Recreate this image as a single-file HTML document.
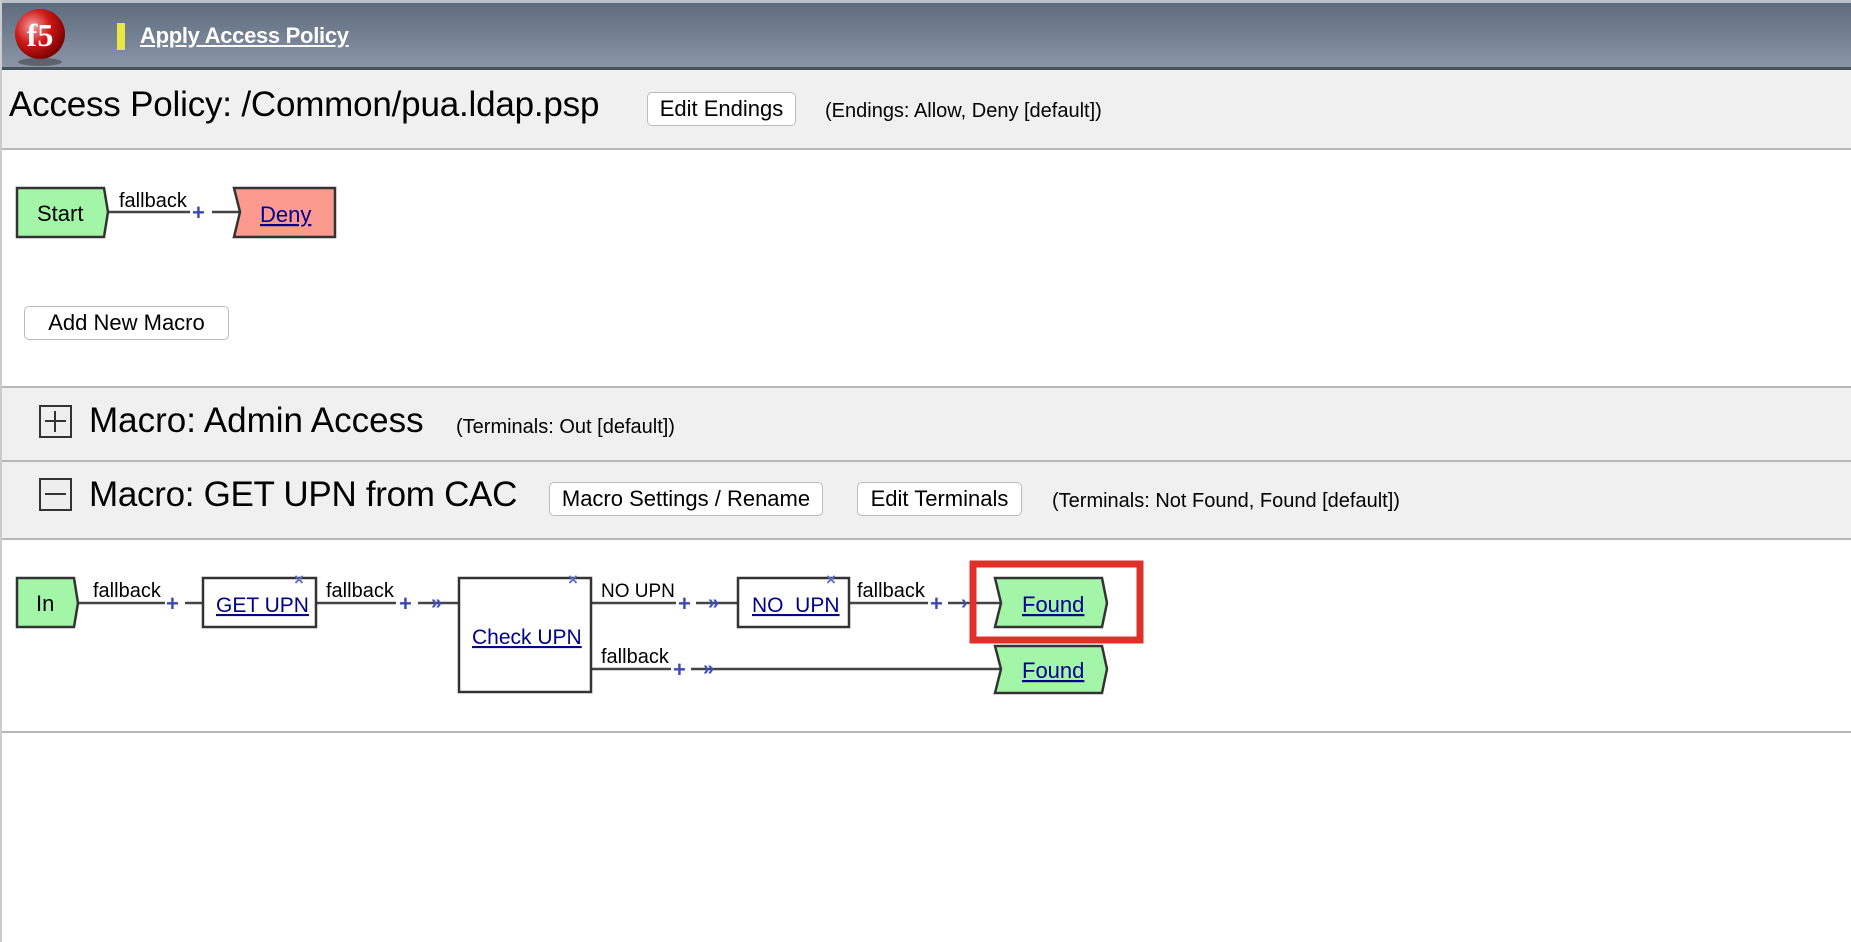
<!DOCTYPE html>
<html><head><meta charset="utf-8"><style>
*{margin:0;padding:0;box-sizing:border-box}
body{width:1851px;height:942px;position:relative;background:#fff;font-family:"Liberation Sans",sans-serif;overflow:hidden;color:#000}
.abs{position:absolute}
.hdr{left:0;top:0;width:1851px;height:70px;background:linear-gradient(#5d6b7d,#8a96a6);border-top:3px solid #b9c0c8;border-bottom:3px solid #49535f}
.band{left:0;width:1851px;background:#f0f0f0;border-bottom:2px solid #b8b8b8}
.btn{position:absolute;background:#fff;border:1px solid #bbb;border-radius:5px;font-size:22px;text-align:center;white-space:nowrap}
.sm{font-size:20px;white-space:nowrap}
.big{font-size:36px;white-space:nowrap}
.box{position:absolute;width:33px;height:33px;border:2px solid #333;background:#eee}
</style></head><body>
<div class="abs hdr"></div>
<svg class="abs" style="left:10px;top:6px" width="62" height="62"><defs><radialGradient id="g" cx="35%" cy="35%" r="70%"><stop offset="0" stop-color="#f4a0a0"/><stop offset=".5" stop-color="#d01818"/><stop offset="1" stop-color="#700"/></radialGradient></defs><ellipse cx="30" cy="56" rx="22" ry="4" fill="#333" opacity=".5"/><circle cx="30" cy="28" r="25" fill="url(#g)"/><text x="30" y="40" text-anchor="middle" font-family="Liberation Serif" font-weight="bold" font-size="32" fill="#fff">f5</text></svg>
<div class="abs" style="left:117px;top:23px;width:8px;height:27px;background:#e8e840"></div>
<div class="abs" style="left:140px;top:23px;color:#fff;font-weight:bold;font-size:22px;text-decoration:underline;letter-spacing:-0.3px">Apply Access Policy</div>

<div class="abs band" style="top:70px;height:80px"></div>
<div class="abs big" style="left:9px;top:85px;font-size:35px;letter-spacing:-0.2px">Access Policy: /Common/pua.ldap.psp</div>
<div class="btn" style="left:647px;top:92px;width:149px;height:34px;line-height:32px">Edit Endings</div>
<div class="abs sm" style="left:825px;top:100px">(Endings: Allow, Deny [default])</div>

<div class="btn" style="left:24px;top:306px;width:205px;height:34px;line-height:32px">Add New Macro</div>

<div class="abs" style="left:0;top:386px;width:1851px;height:2px;background:#b8b8b8"></div>
<div class="abs band" style="top:388px;height:74px"></div>
<div class="box" style="left:39px;top:405px"></div>
<div class="abs" style="left:45px;top:420px;width:21px;height:2px;background:#333"></div>
<div class="abs" style="left:54px;top:411px;width:2px;height:21px;background:#333"></div>
<div class="abs big" style="left:89px;top:401px;font-size:35px">Macro: Admin Access</div>
<div class="abs sm" style="left:456px;top:416px">(Terminals: Out [default])</div>

<div class="abs band" style="top:462px;height:78px"></div>
<div class="box" style="left:39px;top:478px"></div>
<div class="abs" style="left:45px;top:493px;width:21px;height:2px;background:#333"></div>
<div class="abs big" style="left:89px;top:475px;font-size:35px;letter-spacing:-0.3px">Macro: GET UPN from CAC</div>
<div class="btn" style="left:549px;top:482px;width:274px;height:34px;line-height:32px">Macro Settings / Rename</div>
<div class="btn" style="left:857px;top:482px;width:165px;height:34px;line-height:32px">Edit Terminals</div>
<div class="abs sm" style="left:1052px;top:490px">(Terminals: Not Found, Found [default])</div>
<div class="abs" style="left:0;top:731px;width:1851px;height:2px;background:#b8b8b8"></div>
<div class="abs" style="left:0;top:0;width:2px;height:942px;background:#ccc"></div>

<svg class="abs" style="left:0;top:0" width="1851" height="942" font-family="Liberation Sans" font-size="20">
<g stroke="#444" stroke-width="2.5" fill="none">
<line x1="104" y1="212" x2="190" y2="212"/><line x1="212" y1="212" x2="240" y2="212"/>
<line x1="78" y1="603" x2="165" y2="603"/><line x1="185" y1="603" x2="203" y2="603"/>
<line x1="316" y1="603" x2="396" y2="603"/><line x1="418" y1="603" x2="459" y2="603"/>
<line x1="591" y1="603" x2="676" y2="603"/><line x1="696" y1="603" x2="738" y2="603"/>
<line x1="849" y1="603" x2="928" y2="603"/><line x1="948" y1="603" x2="1000" y2="603"/>
<line x1="591" y1="669" x2="671" y2="669"/><line x1="691" y1="669" x2="1000" y2="669"/>
</g>
<g fill="#fff" stroke="#333" stroke-width="2.5">
<rect x="203" y="578" width="113" height="49"/><rect x="459" y="578" width="132" height="114"/><rect x="738" y="578" width="111" height="49"/>
</g>
<path d="M17 188H104L108 212L104 237H17Z" fill="#a3f5a8" stroke="#333" stroke-width="2.5"/>
<path d="M234 188H335V237H234L240 212Z" fill="#fd9a90" stroke="#333" stroke-width="2.5"/>
<path d="M17 578H74L78 603L74 627H17Z" fill="#a3f5a8" stroke="#333" stroke-width="2.5"/>
<path d="M995 578H1102L1107 603L1102 627H995L1001 603Z" fill="#a3f5a8" stroke="#333" stroke-width="2.5"/>
<path d="M995 646H1102L1107 669L1102 693H995L1001 669Z" fill="#a3f5a8" stroke="#333" stroke-width="2.5"/>
<g fill="#000"><text x="37" y="221" font-size="22">Start</text><text x="119" y="207">fallback</text>
<text x="36" y="611" font-size="22">In</text><text x="93" y="597">fallback</text><text x="326" y="597">fallback</text>
<text x="601" y="597" font-size="19">NO UPN</text><text x="857" y="597">fallback</text><text x="601" y="663">fallback</text></g>
<g fill="#00008b" text-decoration="underline" font-size="22">
<text x="260" y="222">Deny</text><text x="216" y="612" font-size="21">GET UPN</text><text x="472" y="644" font-size="21">Check UPN</text>
<text x="752" y="612" font-size="21">NO_UPN</text><text x="1022" y="612">Found</text><text x="1022" y="678">Found</text></g>
<g fill="#3a4ab0" font-size="22" font-weight="bold"><text x="192" y="220">+</text><text x="166" y="611">+</text><text x="399" y="611">+</text><text x="678" y="611">+</text><text x="930" y="611">+</text><text x="673" y="677">+</text></g>
<g fill="#4050c0" font-size="20" font-weight="bold"><text x="431" y="609">»</text><text x="708" y="609">»</text><text x="961" y="609">›</text><text x="703" y="675">»</text></g>
<g fill="#6070c0" font-size="17" font-weight="bold">
<text x="294" y="585">×</text><text x="568" y="585">×</text><text x="826" y="585">×</text></g>
<rect x="973" y="564" width="167" height="76" fill="none" stroke="#e0302a" stroke-width="7"/>
</svg>
</body></html>
